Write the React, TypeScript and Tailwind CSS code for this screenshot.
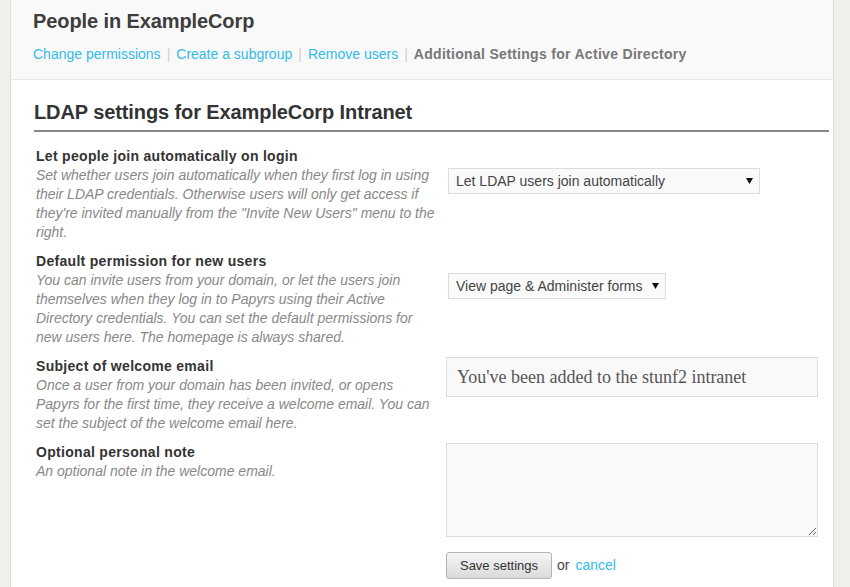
import React from "react";

const sans = { fontFamily: '"Liberation Sans", Arial, sans-serif' };

function Arrow() {
  return (
    <svg width="7" height="6" viewBox="0 0 7 6" className="shrink-0">
      <polygon points="0,0 7,0 3.5,6" fill="#111" />
    </svg>
  );
}

function Row({
  label,
  desc,
  children,
}: {
  label: string;
  desc: string;
  children: React.ReactNode;
}) {
  return (
    <div className="flex mb-[10px]">
      <div className="w-[412px] shrink-0 pl-[2px] pr-[10px] text-[14px] leading-[19px]">
        <div className="font-bold text-[#333] tracking-[0.3px]">{label}</div>
        <div className="italic text-[#888]">{desc}</div>
      </div>
      <div className="flex-1">{children}</div>
    </div>
  );
}

export default function App() {
  return (
    <div
      className="w-[850px] h-[587px] overflow-hidden bg-[#f1efeb] flex items-stretch"
      style={sans}
    >
      <div className="ml-[10px] w-[824px] shrink-0 bg-white border-x border-[#dedede]">
        <div className="h-[80px] bg-[#f9f9f9] border-b border-[#e8e8e8] pl-[22px] pt-[9px]">
          <h1 className="text-[20px] leading-[24px] font-bold text-[#3d3d3d] tracking-[-0.1px]">
            People in ExampleCorp
          </h1>
          <div className="mt-[11px] text-[14px] leading-[20px] flex items-center">
            <span className="text-[#33bbe9]">Change permissions</span>
            <span className="text-[#d0d0d0] mx-[6px]">|</span>
            <span className="text-[#33bbe9]">Create a subgroup</span>
            <span className="text-[#d0d0d0] mx-[6px]">|</span>
            <span className="text-[#33bbe9]">Remove users</span>
            <span className="text-[#d0d0d0] mx-[6px]">|</span>
            <span className="font-bold text-[#777] tracking-[0.3px]">
              Additional Settings for Active Directory
            </span>
          </div>
        </div>

        <div className="pl-[23px] pr-[4px]">
          <h2 className="mt-[20px] text-[20px] leading-[24px] font-bold text-[#333] tracking-[-0.1px] pb-[6px] border-b-2 border-[#888]">
            LDAP settings for ExampleCorp Intranet
          </h2>

          <div className="mt-[15px]">
            <Row
              label="Let people join automatically on login"
              desc={
                'Set whether users join automatically when they first log in using their LDAP credentials. Otherwise users will only get access if they\'re invited manually from the "Invite New Users" menu to the right.'
              }
            >
              <div className="mt-[21px] ml-[2px] w-[312px] h-[26px] border border-[#dcdcdc] bg-[#fafafa] flex items-center justify-between pl-[7px] pr-[6px] text-[14px] text-[#444]">
                <span>Let LDAP users join automatically</span>
                <Arrow />
              </div>
            </Row>

            <Row
              label="Default permission for new users"
              desc="You can invite users from your domain, or let the users join themselves when they log in to Papyrs using their Active Directory credentials. You can set the default permissions for new users here. The homepage is always shared."
            >
              <div className="mt-[21px] ml-[2px] w-[218px] h-[26px] border border-[#dcdcdc] bg-[#fafafa] flex items-center justify-between pl-[7px] pr-[6px] text-[14px] text-[#444]">
                <span>View page &amp; Administer forms</span>
                <Arrow />
              </div>
            </Row>

            <Row
              label="Subject of welcome email"
              desc="Once a user from your domain has been invited, or opens Papyrs for the first time, they receive a welcome email. You can set the subject of the welcome email here."
            >
              <div className="w-[372px] h-[40px] border border-[#dcdcdc] bg-[#f9f9f9] flex items-center pl-[10px]">
                <span
                  className="text-[18px] text-[#555]"
                  style={{ fontFamily: '"Liberation Serif", Georgia, serif' }}
                >
                  You've been added to the stunf2 intranet
                </span>
              </div>
            </Row>

            <Row
              label="Optional personal note"
              desc="An optional note in the welcome email."
            >
              <textarea
                className="block w-[372px] h-[94px] border border-[#dcdcdc] bg-[#f9f9f9] outline-none"
                defaultValue=""
              />
              <div className="mt-[15px] flex items-center text-[14px]">
                <button className="w-[106px] h-[27px] rounded-[3px] border border-[#b4b4b4] bg-gradient-to-b from-[#f6f6f6] to-[#dadada] text-[13px] text-[#333]">
                  Save settings
                </button>
                <span className="ml-[5px] text-[#444]">or</span>
                <span className="ml-[6px] text-[#33bbe9]">cancel</span>
              </div>
            </Row>
          </div>
        </div>
      </div>
    </div>
  );
}
